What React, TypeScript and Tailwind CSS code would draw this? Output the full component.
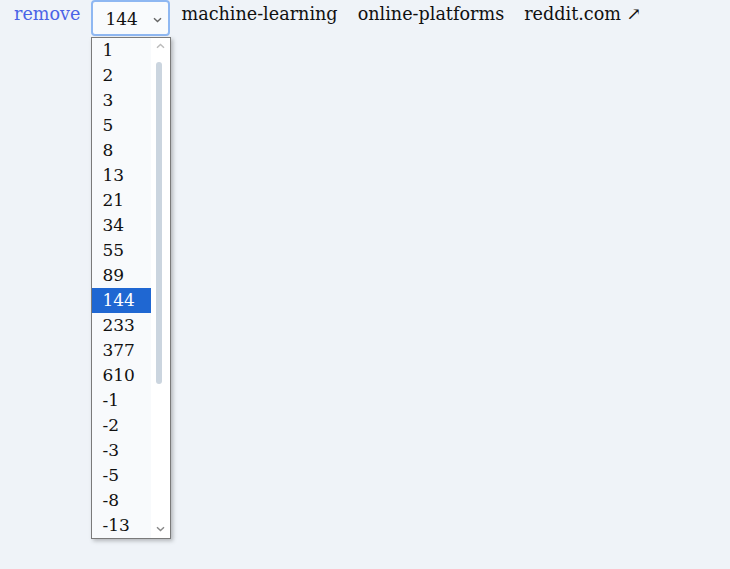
import React from "react";

const options = [
  "1", "2", "3", "5", "8", "13", "21", "34", "55", "89", "144", "233", "377", "610",
  "-1", "-2", "-3", "-5", "-8", "-13",
];

export default function App() {
  return (
    <div
      className="w-[730px] h-[569px] bg-[#eff3f8] text-[#111] relative overflow-hidden"
      style={{ fontFamily: '"DejaVu Serif", "Liberation Serif", serif' }}
    >
      <div className="flex items-start pl-[14px] text-[17.6px] leading-none">
        <span className="mt-[6px] text-[#4a63e6]">remove</span>
        <div className="relative ml-[11px]">
          <div className="w-[79px] h-[36px] rounded-[4px] border-2 border-[#8fb8f2] bg-[#f9fbfd] flex items-center pl-[12px] pr-[6px] justify-between">
            <span className="mt-[2px] text-[17px]">144</span>
            <svg width="9" height="6" viewBox="0 0 9 6" className="mt-[3px]">
              <path d="M1 1.2 L4.5 4.6 L8 1.2" fill="none" stroke="#666" strokeWidth="1.4" />
            </svg>
          </div>
          <div className="absolute left-0 top-[37px] w-[80px] h-[502px] border border-[#7a7a7a] bg-white shadow-[2px_2px_4px_rgba(0,0,0,0.25)] flex">
            <div className="w-[59px] bg-[#f8fafc] flex flex-col">
              {options.map((o) => (
                <div
                  key={o}
                  className={
                    "h-[25px] flex items-center pl-[10px] text-[17px] " +
                    (o === "144" ? "bg-[#1f67d2] text-white" : "")
                  }
                >
                  {o}
                </div>
              ))}
            </div>
            <div className="flex-1 relative bg-white">
              <svg width="9" height="6" viewBox="0 0 9 6" className="absolute left-[5px] top-[5px]">
                <path d="M1 4.8 L4.5 1.4 L8 4.8" fill="none" stroke="#bbb" strokeWidth="1.4" />
              </svg>
              <div className="absolute left-[5px] top-[24px] w-[6px] h-[322px] rounded-[3px] bg-[#cbd5df]" />
              <svg width="9" height="6" viewBox="0 0 9 6" className="absolute left-[5px] bottom-[6px]">
                <path d="M1 1.2 L4.5 4.6 L8 1.2" fill="none" stroke="#888" strokeWidth="1.4" />
              </svg>
            </div>
          </div>
        </div>
        <span className="mt-[6px] ml-[11px]">machine-learning</span>
        <span className="mt-[6px] ml-[20px]">online-platforms</span>
        <span className="mt-[6px] ml-[20px]">reddit.com ↗</span>
      </div>
    </div>
  );
}
